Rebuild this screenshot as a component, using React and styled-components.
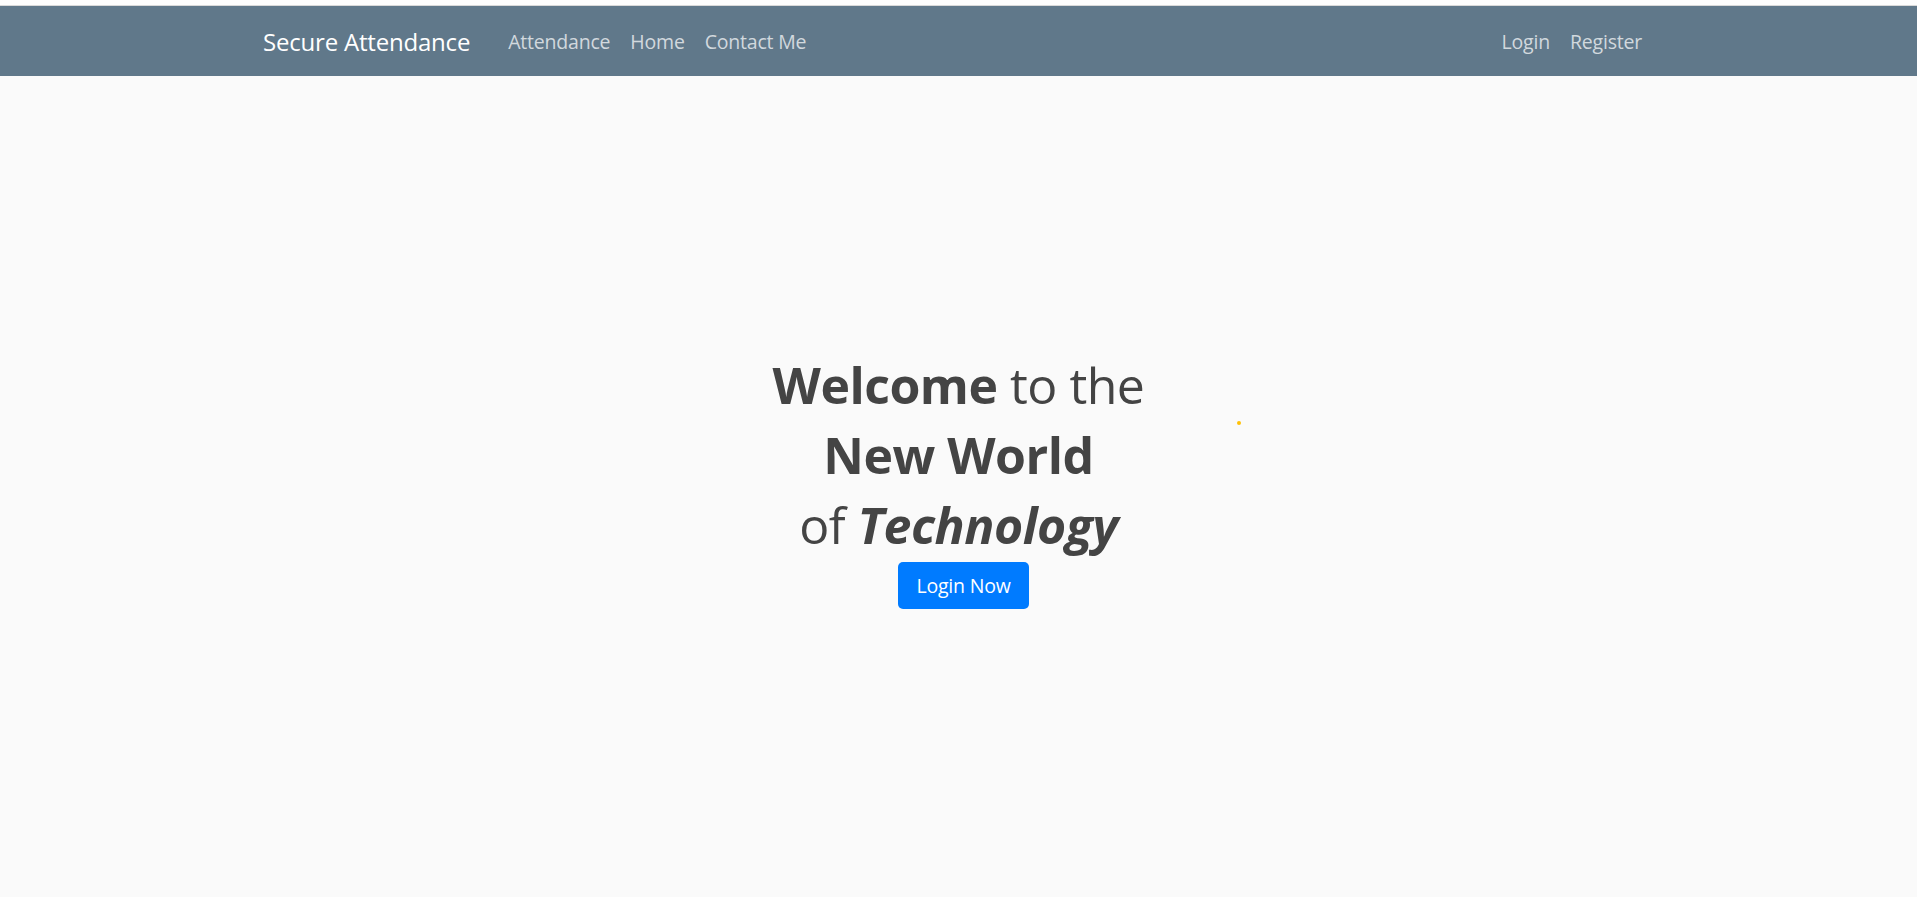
import React from 'react';
import styled, { createGlobalStyle } from 'styled-components';

const GlobalStyle = createGlobalStyle`
  html, body {
    margin: 0;
    padding: 0;
    background: #fafafa;
  }
  body {
    font-family: "Open Sans", "Noto Sans", "Liberation Sans", sans-serif;
  }
`;

const Page = styled.div`
  display: flex;
  flex-direction: column;
  height: 897px;
  overflow: hidden;
`;

const TopStrip = styled.div`
  height: 5px;
  background: #fdfdfd;
  border-bottom: 1px solid #d9d9d9;
`;

const NavBar = styled.nav`
  height: 70px;
  background: #60788a;
  display: flex;
  justify-content: center;
`;

const NavContainer = styled.div`
  width: 1425px;
  padding: 0 19px 0 17px;
  box-sizing: border-box;
  display: flex;
  align-items: center;
`;

const Brand = styled.a`
  font-size: 24px;
  color: #ffffff;
  margin-right: 28px;
  text-decoration: none;
  letter-spacing: -0.2px;
`;

const NavList = styled.div`
  display: flex;
  align-items: center;
  margin-left: ${(props) => (props.right ? 'auto' : '0')};
`;

const NavLink = styled.a`
  font-size: 19.5px;
  color: rgba(255, 255, 255, 0.72);
  padding: 0 10px;
  text-decoration: none;
  letter-spacing: -0.2px;
`;

const Hero = styled.main`
  flex: 1;
  position: relative;
  display: flex;
  flex-direction: column;
  align-items: center;
  justify-content: center;
  padding-bottom: 14px;
`;

const Title = styled.h1`
  margin: 0;
  font-size: 50px;
  line-height: 70px;
  font-weight: 400;
  color: #444444;
  text-align: center;
  letter-spacing: -0.5px;
`;

const Button = styled.button`
  margin: 2px 0 0 10px;
  background: #007bff;
  color: #ffffff;
  border: none;
  border-radius: 5px;
  font-family: inherit;
  font-size: 19.5px;
  height: 47px;
  padding: 0 18px;
  cursor: pointer;
  letter-spacing: -0.2px;
`;

const Spark = styled.span`
  position: absolute;
  left: 1237px;
  top: 345px;
  width: 4px;
  height: 4px;
  border-radius: 50%;
  background: #ffc107;
`;

const App = () => (
  <>
    <GlobalStyle />
    <Page>
      <TopStrip />
      <NavBar>
        <NavContainer>
          <Brand href="#">Secure Attendance</Brand>
          <NavList>
            <NavLink href="#">Attendance</NavLink>
            <NavLink href="#">Home</NavLink>
            <NavLink href="#">Contact Me</NavLink>
          </NavList>
          <NavList right>
            <NavLink href="#">Login</NavLink>
            <NavLink href="#">Register</NavLink>
          </NavList>
        </NavContainer>
      </NavBar>
      <Hero>
        <Title>
          <b>Welcome</b> to the
          <br />
          <b>New World</b>
          <br />
          of <b><i>Technology</i></b>
        </Title>
        <Button>Login Now</Button>
        <Spark />
      </Hero>
    </Page>
  </>
);

export default App;
